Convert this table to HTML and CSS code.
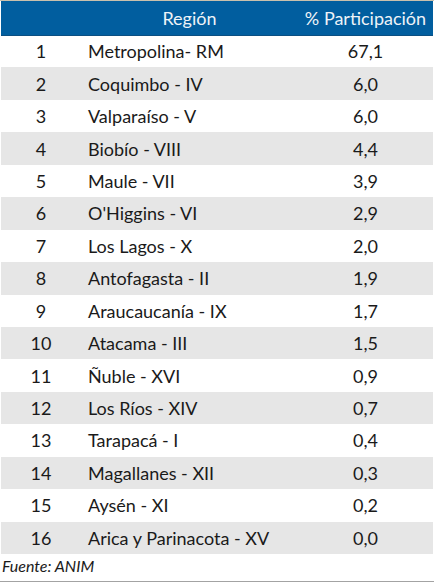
FILE: index.html
```html
<!DOCTYPE html>
<html lang="es">
<head>
<meta charset="utf-8">
<link rel="stylesheet" href="styles.css">
</head>
<body>
<div class="wrap">
  <table class="tbl">
    <thead>
      <tr><th class="c-num"></th><th class="c-reg">Región</th><th class="c-val">% Participación</th></tr>
    </thead>
    <tbody>
      <tr><td class="c-num">1</td><td class="c-reg">Metropolina- RM</td><td class="c-val">67,1</td></tr>
      <tr><td class="c-num">2</td><td class="c-reg">Coquimbo - IV</td><td class="c-val">6,0</td></tr>
      <tr><td class="c-num">3</td><td class="c-reg">Valparaíso - V</td><td class="c-val">6,0</td></tr>
      <tr><td class="c-num">4</td><td class="c-reg">Biobío - VIII</td><td class="c-val">4,4</td></tr>
      <tr><td class="c-num">5</td><td class="c-reg">Maule - VII</td><td class="c-val">3,9</td></tr>
      <tr><td class="c-num">6</td><td class="c-reg">O'Higgins - VI</td><td class="c-val">2,9</td></tr>
      <tr><td class="c-num">7</td><td class="c-reg">Los Lagos - X</td><td class="c-val">2,0</td></tr>
      <tr><td class="c-num">8</td><td class="c-reg">Antofagasta - II</td><td class="c-val">1,9</td></tr>
      <tr><td class="c-num">9</td><td class="c-reg">Araucaucanía - IX</td><td class="c-val">1,7</td></tr>
      <tr><td class="c-num">10</td><td class="c-reg">Atacama - III</td><td class="c-val">1,5</td></tr>
      <tr><td class="c-num">11</td><td class="c-reg">Ñuble - XVI</td><td class="c-val">0,9</td></tr>
      <tr><td class="c-num">12</td><td class="c-reg">Los Ríos - XIV</td><td class="c-val">0,7</td></tr>
      <tr><td class="c-num">13</td><td class="c-reg">Tarapacá - I</td><td class="c-val">0,4</td></tr>
      <tr><td class="c-num">14</td><td class="c-reg">Magallanes - XII</td><td class="c-val">0,3</td></tr>
      <tr><td class="c-num">15</td><td class="c-reg">Aysén - XI</td><td class="c-val">0,2</td></tr>
      <tr><td class="c-num">16</td><td class="c-reg">Arica y Parinacota - XV</td><td class="c-val">0,0</td></tr>
    </tbody>
  </table>
  <p class="source">Fuente: ANIM</p>
</div>
</body>
</html>
```
FILE: styles.css
```css
* { box-sizing: border-box; }
html, body { margin: 0; padding: 0; background: #fff; }
body {
  width: 434px;
  height: 582px;
  font-family: Lato, "Noto Sans", sans-serif;
  color: #1a1a1a;
  overflow: hidden;
}
.wrap {
  height: 582px;
  border-top: 1px solid #c9c0ad;
  border-bottom: 1px solid #a3a3a3;
  display: flex;
  flex-direction: column;
}
.tbl {
  width: 432px;
  margin-left: 1px;
  border-collapse: collapse;
  table-layout: fixed;
}
.tbl th {
  background: #015e9f;
  color: #eef3f8;
  font-weight: 400;
  font-size: 18px;
  height: 34px;
  padding: 0;
  border-bottom: 1px solid #0b4f82;
}
.tbl td {
  height: 32.45px;
  padding: 0;
  font-size: 18px;
}
.tbl tbody tr:nth-child(even) td { background: #e6e6e6; }
.c-num { width: 80px; text-align: center; }
.tbl th.c-reg { width: 217px; text-align: center; }
.tbl td.c-reg { text-align: left; padding-left: 7px; }
.c-val { width: 135px; text-align: center; }
.source {
  margin: 0;
  padding: 2px 0 0 2px;
  font-style: italic;
  font-size: 16px;
  color: #1a1a1a;
}
```
